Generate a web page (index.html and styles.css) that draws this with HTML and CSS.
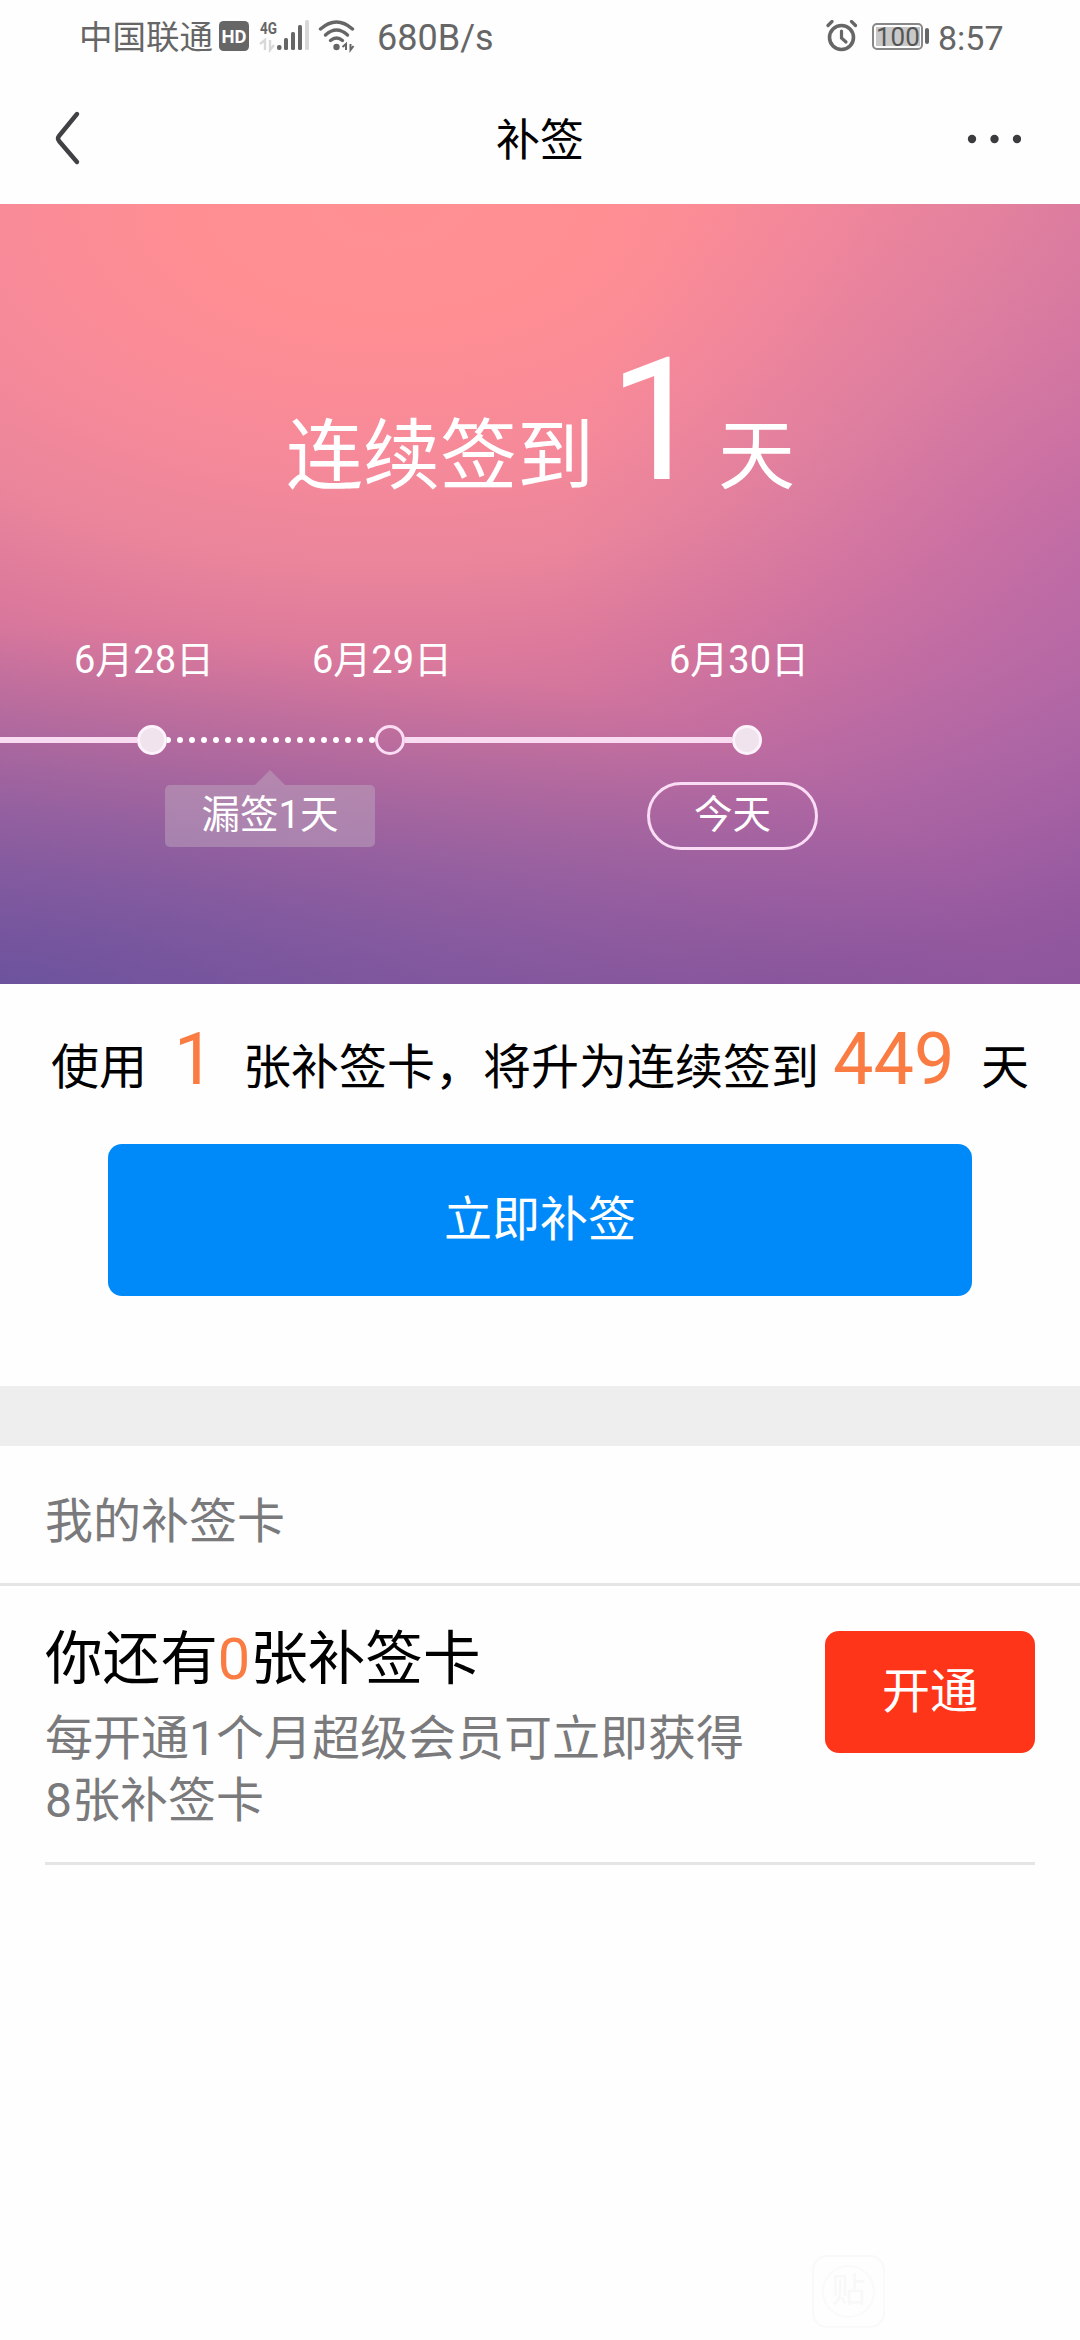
FILE: index.html
```html
<!DOCTYPE html>
<html lang="zh-CN">
<head>
<meta charset="utf-8">
<title>补签</title>
<link rel="stylesheet" href="styles.css">
</head>
<body>
<div class="page">
  <div class="status">
    <span class="carrier">中国联通</span>
    <svg class="hd" width="30" height="30" viewBox="0 0 30 30"><rect width="30" height="30" rx="4.5" fill="#666"/><text x="15" y="21.5" text-anchor="middle" textLength="25" lengthAdjust="spacingAndGlyphs" class="hd-text">HD</text></svg>
    <svg class="signal" width="52" height="34" viewBox="0 0 52 34">
      <text x="1" y="14.5" textLength="17" lengthAdjust="spacingAndGlyphs" class="net-text">4G</text>
      <path d="M1 25l5-4v10M11 21v10l4-5" fill="none" stroke="#d8d8d8" stroke-width="2.4"/>
      <rect x="18" y="26" width="4.500" height="5" rx="2" fill="#666"/>
      <rect x="25" y="19" width="4" height="12" rx="1.500" fill="#666"/>
      <rect x="32" y="13" width="4" height="18" rx="1.500" fill="#666"/>
      <rect x="39" y="6" width="4" height="25" rx="1.500" fill="#666"/>
      <rect x="46" y="1" width="4" height="30" rx="1.500" fill="#d8d8d8"/>
    </svg>
    <svg class="wifi" width="38" height="34" viewBox="0 0 38 34">
      <g fill="none" stroke="#666" stroke-width="3.400" stroke-linecap="round"><path d="M2.500 10Q18.500-4 34.500 10"/><path d="M7.500 16Q18.500 6 29.500 16"/><path d="M12.500 21.500Q18.500 16.500 24.500 21.500"/></g>
      <circle cx="18.500" cy="28" r="3.200" fill="#666"/>
      <path d="M24.500 28l3.500-3v6M32.500 25v6l3-4" fill="none" stroke="#666" stroke-width="2"/>
    </svg>
    <span class="speed">680B/s</span>
    <svg class="alarm" width="32" height="32" viewBox="0 0 32 32" fill="none" stroke="#666" stroke-linecap="round">
      <circle cx="15.500" cy="17.500" r="12" stroke-width="3.600"/><path d="M15.500 11v7l4.500 4" stroke-width="3.200"/><path d="M2 5.500l4-4M29.500 5.500l-4-4" stroke-width="3.200"/>
    </svg>
    <span class="battery"><span class="battery-level">100</span></span>
    <span class="battery-cap"></span>
    <span class="clock">8:57</span>
  </div>

  <div class="nav">
    <svg class="back" width="30" height="56" viewBox="0 0 30 56"><path d="M25 4L7 26q-2 2.500 0 5L25 52" fill="none" stroke="#404045" stroke-width="4.400" stroke-linecap="round"/></svg>
    <span class="title">补签</span>
    <svg class="more" width="54" height="10" viewBox="0 0 54 10" fill="#3c3c3e"><circle cx="5" cy="5" r="4.200"/><circle cx="27.500" cy="5" r="4.200"/><circle cx="50" cy="5" r="4.200"/></svg>
  </div>

  <div class="hero">
    <div class="streak"><span class="streak-text">连续签到</span><span class="streak-num">1</span><span class="streak-text">天</span></div>
    <div class="dates"><span class="date">6月28日</span><span class="date">6月29日</span><span class="date last">6月30日</span></div>
    <div class="track">
      <span class="line lead"></span><span class="dot"></span>
      <svg width="208" height="8" viewBox="0 0 208 8"><path d="M1 4H206" stroke="#fff" stroke-width="6" stroke-linecap="round" stroke-dasharray="0 12"/></svg>
      <span class="dot hollow"></span><span class="line next"></span><span class="dot"></span>
    </div>
    <div class="tags"><span class="missed">漏签1天</span><span class="today">今天</span></div>
  </div>

  <div class="promo">
    <span>使用</span><span class="num one">1</span><span>张补签卡，将升为连续签到</span><span class="num total">449</span><span>天</span>
  </div>
  <div class="sign">立即补签</div>
  <div class="band"></div>
  <div class="heading">我的补签卡</div>
  <div class="card">
    <div class="info">
      <div class="count">你还有<span class="zero">0</span>张补签卡</div>
      <div class="desc">每开通1个月超级会员可立即获得<br>8张补签卡</div>
    </div>
    <div class="open">开通</div>
  </div>
  <div class="mark"><span class="mark-bubble">贴</span></div>
</div>
</body>
</html>
```
FILE: styles.css
```css
* { box-sizing: border-box; }
body { margin: 0; background: #fff; }
svg { display: block; flex: none; }
.page {
  width: 1080px; height: 2340px; overflow: hidden;
  display: flex; flex-direction: column;
  background: #fefefe; color: #000;
  font-family: Roboto, "Noto Sans CJK SC", sans-serif;
  white-space: nowrap;
}

/* Status bar */
.status { height: 74px; padding-left: 79px; display: flex; align-items: center; color: #666; }
.carrier { font-size: 33.5px; line-height: 40px; width: 135px; padding-top: 2px; }
.hd { margin-left: 5px; margin-top: -3px; }
.hd-text { font: 700 18px Roboto, sans-serif; fill: #fff; }
.signal { margin-left: 10px; margin-top: -2px; }
.net-text { font: 700 17px Roboto, sans-serif; fill: #666; }
.wifi { margin-left: 7px; margin-top: -2px; }
.speed { font-size: 36px; line-height: 40px; margin-left: 21px; width: 447px; padding-top: 1px; }
.alarm { margin-left: 2px; margin-top: -2px; }
.battery { width: 51px; height: 27px; margin-left: 14px; margin-top: -2px; padding: 2px; border: 2px solid #888; border-radius: 5px; display: flex; }
.battery-level { flex: 1; background: #c8c8c8; color: #555; font-size: 26px; line-height: 20px; text-align: center; }
.battery-cap { width: 4px; height: 16px; margin: -2px 0 0 2px; border-radius: 2px; background: #666; }
.clock { font-size: 34px; line-height: 40px; margin-left: 9px; padding-top: 1px; }

/* Navigation bar */
.nav { height: 130px; padding: 0 59px 0 52px; display: flex; align-items: center; justify-content: space-between; }
.back { width: 54px; margin-top: -2px; }
.back path { transform: translateX(-12px); }
.title { padding: 3px 0 0 7px; font-size: 44px; line-height: 60px; }
.more { margin-top: -1px; }

/* Check-in banner */
.hero {
  height: 780px; color: #fff; display: flex; flex-direction: column;
  background:
    radial-gradient(ellipse 1000px 360px at 0 100%, rgba(84, 80, 158, .6), rgba(84, 80, 158, 0)),
    radial-gradient(ellipse 520px 520px at 100% 45%, rgba(172, 98, 176, .4), rgba(172, 98, 176, 0)),
    radial-gradient(ellipse 1500px 880px at 390px 0, #ff9092 0%, #ff8e93 14%, #f78a99 28%, #ea859b 41%, #da789c 53%, #c56f9e 64%, #b067a0 74%, #a05f9f 83%, #91579c 92%, #8a559b 100%);
}
.streak { height: 340px; padding: 137px 0 0 286px; display: flex; align-items: baseline; font-size: 77px; line-height: 160px; }
.streak-text { position: relative; top: 4px; }
.streak-num { font-size: 170px; width: 124px; padding-left: 15px; }
.dates { height: 96px; margin-top: 84px; display: flex; padding: 4px 0 0 74px; font-size: 38px; line-height: 56px; }
.date { width: 238px; }
.date.last { margin-left: 119px; }
.track { height: 32px; display: flex; align-items: center; }
.line { height: 6px; background: #f9dcf2; }
.lead { width: 137px; }
.next { width: 327px; }
.dot { width: 30px; height: 30px; border: 3px solid #fdf3fc; border-radius: 50%; background: #f1e3ed; flex: none; }
.dot.hollow { background: none; border-color: #fbdcf5; }
.tags { display: flex; align-items: flex-start; padding: 26px 0 0 165px; font-size: 38.500px; }
.missed { position: relative; width: 210px; height: 62px; margin-top: 3px; border-radius: 5px; background: rgba(190, 165, 190, .5); text-align: center; line-height: 59px; }
.missed::before { content: ""; position: absolute; left: 90px; top: -15px; border: 15px solid transparent; border-top: 0; border-bottom-color: rgba(190, 165, 190, .5); }
.today { width: 171px; height: 68px; margin-left: 272px; border: 3px solid #fbdcf5; border-radius: 34px; text-align: center; line-height: 59px; }

/* Upgrade offer */
.promo { height: 160px; padding: 31px 0 0 51px; display: flex; align-items: baseline; font-size: 48px; line-height: 90px; }
.num { font-size: 72px; color: #fa7c42; }
.num.one { width: 96px; padding-left: 27px; }
.num.total { width: 162px; padding-left: 14px; }
.sign { height: 152px; margin: 0 108px; border-radius: 14px; background: #008af9; color: #fff; font-size: 48px; line-height: 151px; text-align: center; }
.band { height: 60px; margin-top: 90px; background: #eee; }

/* Owned cards */
.heading { height: 140px; padding-left: 45px; border-bottom: 3px solid #e5e5e5; color: #7a7a7c; font-size: 48px; line-height: 151px; }
.card { height: 279px; margin: 0 45px; border-bottom: 3px solid #e5e5e5; display: flex; justify-content: space-between; }
.count { padding-top: 34px; font-size: 57.600px; line-height: 80px; }
.zero { color: #fa7c42; }
.desc { margin-top: 8px; color: #7a7a7c; font-size: 48px; line-height: 62px; }
.open { width: 210px; height: 122px; margin-top: 45px; border-radius: 14px; background: #ff3519; color: #fff; font-size: 48px; line-height: 121px; text-align: center; }

/* Watermark */
.mark { width: 73px; height: 73px; margin: 390px 0 0 812px; padding: 8px; border: 2px solid #f9f9f9; border-radius: 15px; }
.mark-bubble { display: block; height: 53px; border: 2px solid #fafafa; border-radius: 50%; color: #f8f8f8; font-size: 34px; line-height: 46px; text-align: center; }
```
